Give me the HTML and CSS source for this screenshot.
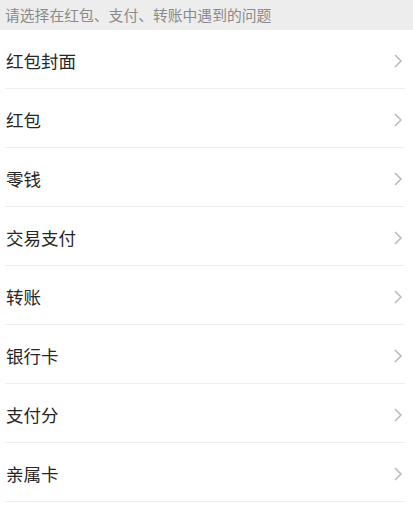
FILE: index.html
```html
<!DOCTYPE html>
<html lang="zh">
<head>
<meta charset="utf-8">
<link rel="stylesheet" href="styles.css">
</head>
<body>
<div class="hint">请选择在红包、支付、转账中遇到的问题</div>
<ul class="list">
  <li class="row"><span class="label">红包封面</span><svg class="chev" viewBox="0 0 8 14"><path d="M1 1l6 6-6 6"/></svg></li>
  <li class="row"><span class="label">红包</span><svg class="chev" viewBox="0 0 8 14"><path d="M1 1l6 6-6 6"/></svg></li>
  <li class="row"><span class="label">零钱</span><svg class="chev" viewBox="0 0 8 14"><path d="M1 1l6 6-6 6"/></svg></li>
  <li class="row"><span class="label">交易支付</span><svg class="chev" viewBox="0 0 8 14"><path d="M1 1l6 6-6 6"/></svg></li>
  <li class="row"><span class="label">转账</span><svg class="chev" viewBox="0 0 8 14"><path d="M1 1l6 6-6 6"/></svg></li>
  <li class="row"><span class="label">银行卡</span><svg class="chev" viewBox="0 0 8 14"><path d="M1 1l6 6-6 6"/></svg></li>
  <li class="row"><span class="label">支付分</span><svg class="chev" viewBox="0 0 8 14"><path d="M1 1l6 6-6 6"/></svg></li>
  <li class="row"><span class="label">亲属卡</span><svg class="chev" viewBox="0 0 8 14"><path d="M1 1l6 6-6 6"/></svg></li>
</ul>
</body>
</html>
```
FILE: styles.css
```css
html, body {
  margin: 0;
  padding: 0;
  background: #ffffff;
  font-family: "Noto Sans CJK SC", "Noto Sans", sans-serif;
}
.hint {
  height: 30px;
  box-sizing: border-box;
  padding: 0 0 0 5px;
  display: flex;
  align-items: center;
  background: #ededed;
  color: #8a8a8a;
  font-size: 14.8px;
  line-height: 1;
}
.list {
  list-style: none;
  margin: 0;
  padding: 0 8px 0 5px;
}
.row {
  height: 59px;
  box-sizing: border-box;
  border-bottom: 1px solid #eeeeee;
  display: flex;
  align-items: center;
  justify-content: space-between;
  padding: 3px 3px 0 1px;
}
.label {
  font-size: 17.5px;
  color: #262626;
  line-height: 1;
}
.chev {
  width: 8px;
  height: 14px;
  fill: none;
  stroke: #b8b8b8;
  stroke-width: 1.5;
}
```
